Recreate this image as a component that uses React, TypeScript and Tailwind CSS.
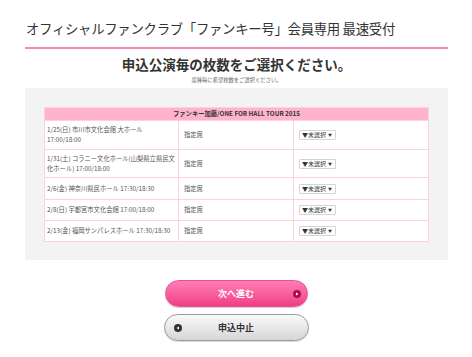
const rows = [
  { lines: ["1/25(日) 市川市文化会館 大ホール", "17:00/18:00"], h: "h-[29px]" },
  { lines: ["1/31(土) コラニー文化ホール(山梨県立県民文", "化ホール) 17:00/18:00"], h: "h-[28px]" },
  { lines: ["2/6(金) 神奈川県民ホール 17:30/18:30"], h: "h-[22px]" },
  { lines: ["2/8(日) 宇都宮市文化会館 17:00/18:00"], h: "h-[21px]" },
  { lines: ["2/13(金) 福岡サンパレスホール 17:30/18:30"], h: "h-[21px]" },
];

function SelectBox() {
  return (
    <div className="flex h-[10px] w-[37px] items-center justify-between rounded-[1px] border border-[#d4d4d4] bg-white pl-[2px] pr-[3px] text-[6px] leading-none text-[#333]">
      <span>▼未選択</span>
      <span className="text-[4px]">▼</span>
    </div>
  );
}

export default function App() {
  return (
    <div
      className="h-[357px] w-[472px] overflow-hidden bg-white text-[#333]"
      style={{ fontFamily: '"Noto Sans CJK JP", "Noto Sans", sans-serif' }}
    >
      <div className="ml-[25px] w-[423px]">
        <h1 className="pt-[18px] pl-px text-[13.4px] leading-[20px] tracking-[-0.3px] text-[#333]">
          オフィシャルファンクラブ「ファンキー号」会員専用 最速受付
        </h1>
        <div className="mt-[9px] h-[1.5px] bg-[#f28bb8]" />
        <h2 className="mt-[6px] text-center text-[13.5px] font-bold leading-[18px] text-[#333]">
          申込公演毎の枚数をご選択ください。
        </h2>
        <p className="mt-[3.5px] text-center text-[5.3px] leading-[8px] text-[#666]">
          席種毎に希望枚数をご選択ください。
        </p>

        <div className="mt-[4px] h-[172px] bg-[#f3f3f3] p-[19px]">
          <div className="border border-[#fbd3e0] bg-white">
            <div className="flex h-[12px] items-center justify-center bg-[#ffb3cd] text-[6.3px] font-bold text-[#333]">
              ファンキー加藤/ONE FOR HALL TOUR 2015
            </div>
            {rows.map((row, i) => (
              <div key={i} className={`flex border-t border-[#fbd3e0] ${row.h}`}>
                <div className="flex w-[134px] flex-col justify-center border-r border-[#fbd3e0] pl-[2px] text-[6.3px] leading-[10px] text-[#555]">
                  {row.lines.map((l) => (
                    <span key={l} className="whitespace-nowrap">
                      {l}
                    </span>
                  ))}
                </div>
                <div className="flex w-[115px] items-center border-r border-[#fbd3e0] pl-[5px] text-[6.3px] text-[#555]">
                  指定席
                </div>
                <div className="flex flex-1 items-center pl-[5px]">
                  <SelectBox />
                </div>
              </div>
            ))}
          </div>
        </div>
      </div>

      <div className="mt-[20px] flex flex-col items-center gap-[7px]">
        <button className="relative flex h-[27px] w-[143px] items-center justify-center rounded-full border border-[#ee4f92] bg-gradient-to-b from-[#ff7db6] to-[#f03c86] text-[9px] font-bold text-white shadow-[0_1px_1px_rgba(0,0,0,0.2)]">
          次へ進む
          <span className="absolute right-[6px] top-1/2 flex h-[8px] w-[8px] -translate-y-1/2 items-center justify-center rounded-full bg-[#a8124c]">
            <svg width="4" height="4" viewBox="0 0 4 4">
              <path d="M1 0.5 L3.5 2 L1 3.5 Z" fill="#fff" />
            </svg>
          </span>
        </button>
        <button className="relative flex h-[27px] w-[145px] items-center justify-center rounded-full border border-[#9a9a9a] bg-gradient-to-b from-[#fafafa] to-[#d6d6d6] text-[9px] font-bold text-[#333] shadow-[0_1px_1px_rgba(0,0,0,0.15)]">
          申込中止
          <span className="absolute left-[9px] top-1/2 flex h-[8px] w-[8px] -translate-y-1/2 items-center justify-center rounded-full bg-[#333]">
            <svg width="4" height="4" viewBox="0 0 4 4">
              <path d="M3 0.5 L0.5 2 L3 3.5 Z" fill="#fff" />
            </svg>
          </span>
        </button>
      </div>
    </div>
  );
}
